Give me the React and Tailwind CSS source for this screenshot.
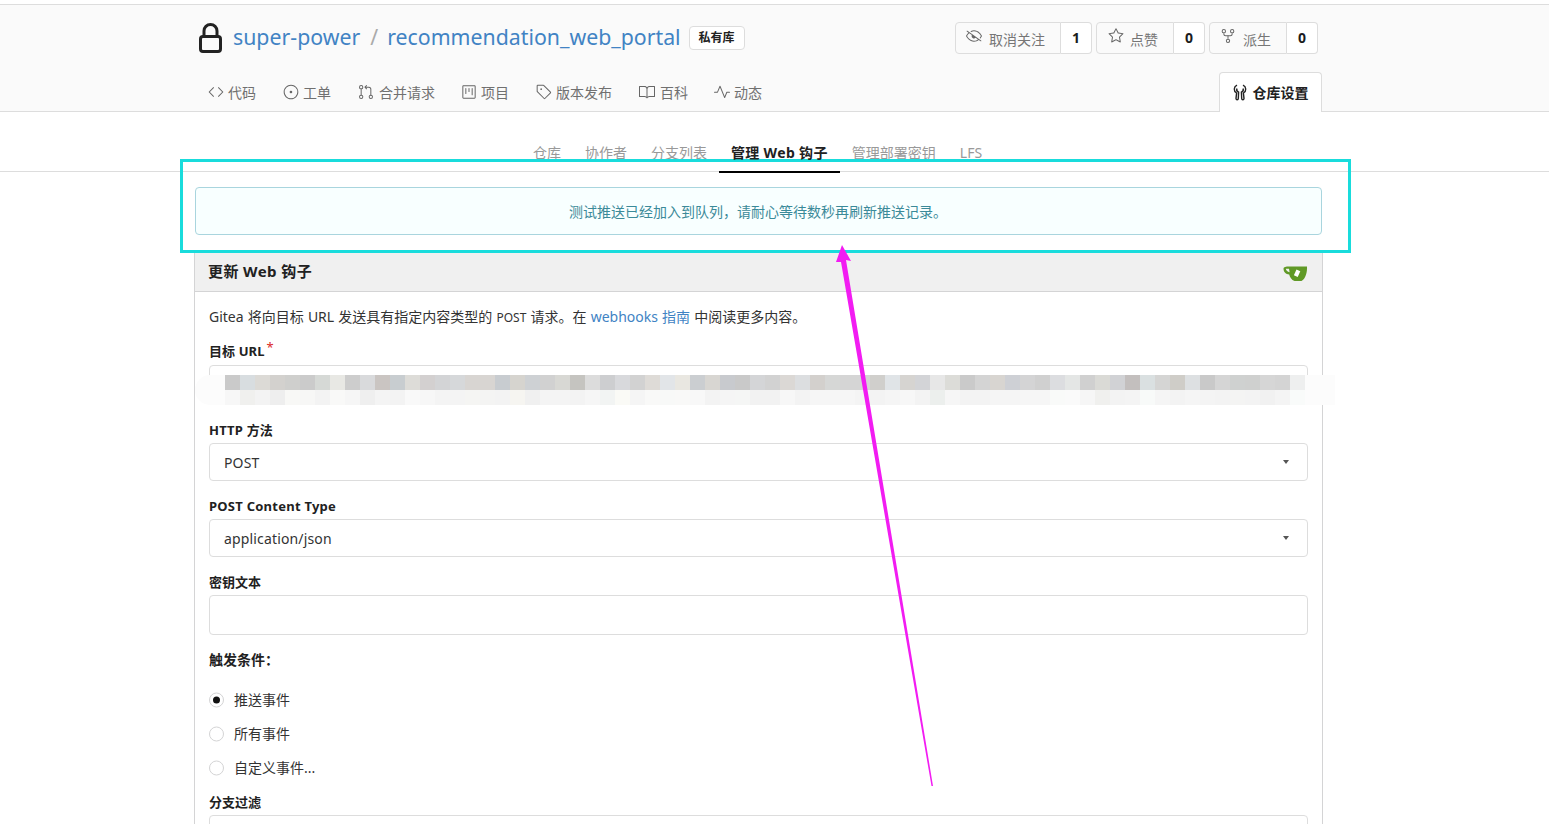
import {
    GoCode,
    GoIssueOpened,
    GoGitPullRequest,
    GoProject,
    GoTag,
    GoBook,
    GoPulse,
    GoEyeClosed,
    GoStar,
    GoRepoForked,
} from "react-icons/go";

const repoTabs = [
    { name: "代码", icon: GoCode, text: "ml-[4px] mr-[1px]" },
    { name: "工单", icon: GoIssueOpened, text: "ml-[4px] mr-[1px]" },
    { name: "合并请求", icon: GoGitPullRequest, text: "ml-[5px]" },
    { name: "项目", icon: GoProject, text: "ml-[4px] mr-[1px]" },
    { name: "版本发布", icon: GoTag, text: "ml-[4px] mr-[1px]" },
    { name: "百科", icon: GoBook, text: "ml-[5px]" },
    { name: "动态", icon: GoPulse, text: "ml-[4px] mr-[1px]" },
];

const subTabs = ["仓库", "协作者", "分支列表", "管理 Web 钩子", "管理部署密钥", "LFS"];

// colours of the blurred squares hiding the url
const topRow = [
    "cacaca", "d8dde0", "dcdad6", "d3d1ce", "cfcfcd", "cbcbcb", "d6d9d6", "e8e8e4", "cdcdcd", "d9dadc", "cac5c2", "c8cdd0",
    "dddcd8", "d3d0d0", "d3d4d6", "d6d8da", "d8d5d2", "d8d5d2", "c8ccd0", "d6d4cf", "ced1d4", "d1d1d1", "d8d8d4", "c5c4c0",
    "dcdcdc", "cdced0", "d8d9dc", "d2d2d2", "dedbd7", "e2e5e8", "e9e7e1", "cbced1", "d8d6d2", "c8cace", "c9c9c9", "d4d5d7",
    "d2d2d2", "dbd8d5", "dcdee0", "d3d0cd", "d6d7d6", "d5d5d5", "d5d5d5", "d0cfcc", "e0e4e7", "d6d4d1", "d3d4d7", "e7e7e7",
    "dcdcd8", "cacaca", "d4d4d4", "d8d5d1", "ced0d5", "d4d4d5", "d0d0d0", "dcdde0", "e4e6e5", "d0d0d0", "dadad6", "d1d2d5",
    "c3bfbe", "dae0e1", "d5d5d4", "cfcdc8", "dde0e2", "c9c9c9", "d5d5d5", "cfd1d0", "cfd0cf", "d6d6d6", "d4d4d4", "eeefef",
];

const bottomRow = [
    "f7f7f7", "f0f0ee", "f3f3f3", "eeeeee", "f8f8f6", "f7f7f6", "f3f3f3", "f9f9f8", "f6f6f6", "efefef", "f4f4f4", "f3f3f3",
    "f9f9f9", "f7f7f7", "f4f4f4", "f4f4f4", "f5f5f3", "f4f4f3", "f3f3f3", "f6f5f1", "f0f0f0", "f4f4f4", "f4f4f4", "f3f3f3",
    "f6f6f6", "f2f4f3", "fafaf6", "f5f5f5", "f9f9f8", "f8f9f8", "f9f9f8", "f8f8f8", "f3f3f3", "f5f5f5", "f5f6f5", "f2f2f2",
    "f2f2f2", "f7f7f7", "f3f3f3", "f6f6f6", "f6f6f6", "f6f6f6", "f4f4f4", "f3f3f3", "f5f5f5", "f7f7f7", "f3f3f3", "ecefed",
    "f6f6f6", "f3f3f3", "f3f3f3", "f5f5f5", "f5f5f5", "f6f6f6", "f6f6f6", "f9faf9", "fafafa", "f6f6f6", "f0f0ee", "f3f3f3",
    "f4f4f4", "f8faf9", "f5f5f5", "f3f3f3", "f5f5f5", "f4f4f4", "f3f3f3", "f4f4f3", "f3f3f3", "f1f1f1", "f4f4f4", "f9fbfa",
];

const Lock = () => (
    <svg width="23" height="30" viewBox="0 0 23 30" className="shrink-0">
        <path d="M5 14V8a6.500 6.500 0 0 1 13 0v6" fill="none" stroke="#222" strokeWidth="3" />
        <rect x="1.500" y="13.500" width="20" height="15" rx="2.500" fill="none" stroke="#222" strokeWidth="3" />
    </svg>
);

const Wrench = () => (
    <svg width="14" height="17" viewBox="0 0 14 17" fill="none" stroke="#222" strokeWidth="1.400">
        <path d="M4 1.200C.6 2.800.3 7 3.600 9L3 14.300C2.900 16.200 5.200 16.200 5.300 14.500L5.600 8.200C4.200 7.500 3.400 5.800 4 4.500M10 1.200C13.400 2.800 13.700 7 10.400 9L11 14.300C11.100 16.200 8.800 16.200 8.700 14.500L8.400 8.200C9.800 7.500 10.600 5.800 10 4.500" />
    </svg>
);

const GiteaCup = () => (
    <svg width="25" height="17" viewBox="0 0 25 17">
        <path d="M6 1.500h18c.4 5.500-1.500 12.500-5.500 14.500h-7C8.500 15 6.800 12 6.200 9.500 3 9.300.5 7 .5 3.500.5 2 3 1.500 6 1.500z" fill="#609926" />
        <path d="M2.800 3.800c1.200-.2 2.400-.2 3.200-.1l.6 3.500c-2-.2-3.500-1.500-3.800-3.400z" fill="#f0f0f0" />
        <path d="M13.500 4.500l3.800 1.800-2.600 5.700-3.800-1.800z" fill="#fff" />
    </svg>
);

const CountButton = ({ icon: Icon, label, count, labelClass }) => (
    <div className="flex h-[32px] text-sm">
        <div
            className={`flex items-center rounded-l border border-[#ddd] bg-[#fafafa] text-[#767676] ${labelClass}`}
        >
            <Icon size={16} className="-translate-y-[2px] text-[#666]" />
            <span className="translate-y-[2px]">{label}</span>
        </div>
        <div className="flex w-[31px] items-center justify-center rounded-r border border-l-0 border-[#ddd] bg-white font-bold text-[#1b1c1d]">
            {count}
        </div>
    </div>
);

const FieldLabel = ({ children, className = "text-[13px]" }) => (
    <div className={`mt-[16px] h-[18px] leading-[18px] font-bold text-[#212121] ${className}`}>
        {children}
    </div>
);

const SelectBox = ({ value }) => (
    <div className="mt-[4px] flex h-[38px] items-center justify-between rounded border border-[#ddd] pr-[18px] pl-[14px] text-sm tracking-[0.15px] text-[#333]">
        <span className="translate-y-[1px]">{value}</span>
        <span className="h-0 w-0 border-x-[3.5px] border-t-[4px] border-x-transparent border-t-[#555]" />
    </div>
);

const Radio = ({ label, checked }) => (
    <div className="flex h-[34px] items-center text-sm text-[#333]">
        <span className="flex h-[15px] w-[15px] -translate-y-[0.5px] items-center justify-center rounded-full border border-[#d4d4d5] bg-white">
            {checked && <span className="h-[7px] w-[7px] rounded-full bg-[#111]" />}
        </span>
        <span className="ml-[10px]">{label}</span>
    </div>
);

const App = () => {
    return (
        <div className="relative h-[824px] w-[1549px] overflow-hidden bg-white font-['Noto_Sans','Noto_Sans_CJK_SC',sans-serif]">
            {/* repo header */}
            <div className="mt-[4px] h-[108px] border-y border-[#ddd] bg-[#fafafa]">
                <div className="ml-[195px] w-[1127px]">
                    <div className="flex items-start justify-between px-[4px] pt-[17px]">
                        <div className="flex h-[32px] items-center">
                            <Lock />
                            <div className="-mt-[2px] flex items-center text-[21.3px]">
                                <span className="ml-[11px] text-[#4183c4]">super-power</span>
                                <span className="mr-[9px] ml-[10px] text-[#aaa]">/</span>
                                <span className="text-[#4183c4]">recommendation_web_portal</span>
                            </div>
                            <span className="ml-[8px] flex h-[24px] w-[56px] items-center justify-center rounded border border-[#ddd] bg-white text-xs font-bold text-[#222]">
                                私有库
                            </span>
                        </div>
                        <div className="flex gap-[4px]">
                            <CountButton icon={GoEyeClosed} label="取消关注" count="1" labelClass="w-[106px] gap-[7px] pl-[10px]" />
                            <CountButton icon={GoStar} label="点赞" count="0" labelClass="w-[78px] gap-[6px] pl-[11px]" />
                            <CountButton icon={GoRepoForked} label="派生" count="0" labelClass="w-[78px] gap-[7px] pl-[10px]" />
                        </div>
                    </div>
                    <div className="mt-[18px] flex h-[40px] items-center justify-between">
                        <div className="flex gap-[26px] pt-[1px] pl-[13px] text-sm text-[#707070]">
                            {repoTabs.map((tab) => (
                                <div key={tab.name} className="flex items-center">
                                    <tab.icon size={16} className="-translate-y-[1px] text-[#666]" />
                                    <span className={tab.text}>{tab.name}</span>
                                </div>
                            ))}
                        </div>
                        <div className="flex h-[40px] w-[103px] items-center justify-center gap-[6px] self-start rounded-t border border-b-0 border-[#ddd] bg-white text-sm font-bold text-[#212121]">
                            <Wrench />
                            仓库设置
                        </div>
                    </div>
                </div>
            </div>

            {/* settings sub navigation */}
            <div className="flex h-[60px] justify-center border-b border-[#ddd] pr-[34px]">
                {subTabs.map((tab) =>
                    tab === "管理 Web 钩子" ? (
                        <div
                            key={tab}
                            className="z-10 h-[61px] border-b-2 border-black px-[12px] pt-[31px] text-sm font-bold tracking-[0.35px] text-[#212121]"
                        >
                            {tab}
                        </div>
                    ) : (
                        <div key={tab} className="px-[12px] pt-[31px] text-sm text-[#999]">
                            {tab}
                        </div>
                    )
                )}
            </div>

            <div className="ml-[195px] w-[1127px]">
                <div className="mt-[15px] flex h-[48px] items-center justify-center rounded border border-[#a9d5de] bg-[#f8ffff] pt-[1px] pr-[1px] text-sm text-[#3b8a99]">
                    测试推送已经加入到队列，请耐心等待数秒再刷新推送记录。
                </div>

                {/* webhook form */}
                <div className="-mx-px mt-[15px] border border-[#d4d4d5]">
                    <div className="flex h-[41px] items-center justify-between border-b border-[#d4d4d5] bg-[#f0f0f0] pr-[14px] pl-[13px]">
                        <span className="text-[15px] font-bold tracking-[0.4px] text-[#212121]">更新 Web 钩子</span>
                        <span className="mt-[5px]">
                            <GiteaCup />
                        </span>
                    </div>
                    <div className="px-[14px] pt-[15px] pb-[40px]">
                        <p className="h-[20px] text-sm leading-5 [word-spacing:0.5px] text-[#333]">
                            Gitea 将向目标 URL 发送具有指定内容类型的 <span className="text-xs">POST</span> 请求。在{" "}
                            <span className="text-[#4183c4]">webhooks 指南</span> 中阅读更多内容。
                        </p>
                        <FieldLabel className="-translate-y-[1px] text-[13px] tracking-[0.1px]">
                            目标 URL<span className="relative -top-[4px] ml-[2px] font-normal text-[#db2828]">*</span>
                        </FieldLabel>
                        <div className="mt-[4px] h-[40px] rounded border border-[#ddd]" />
                        <FieldLabel className="text-[13px] tracking-[0.2px]">HTTP 方法</FieldLabel>
                        <SelectBox value="POST" />
                        <FieldLabel className="text-[13px] tracking-[0.25px]">POST Content Type</FieldLabel>
                        <SelectBox value="application/json" />
                        <FieldLabel>密钥文本</FieldLabel>
                        <div className="mt-[4px] h-[40px] rounded border border-[#ddd]" />
                        <FieldLabel className="text-sm">触发条件：</FieldLabel>
                        <div className="mt-[14px]">
                            <Radio label="推送事件" checked />
                            <Radio label="所有事件" />
                            <Radio label="自定义事件..." />
                        </div>
                        <div className="-mt-[8px]">
                            <FieldLabel>分支过滤</FieldLabel>
                        </div>
                        <div className="mt-[4px] h-[40px] rounded border border-[#ddd]" />
                    </div>
                </div>
            </div>

            {/* pixelated url covering the input */}
            <div className="absolute top-[375px] left-[195px] h-[30px] w-[1140px] rounded-l-2xl bg-[#fcfcfc] pl-[30px]">
                <div className="flex h-[15px]">
                    {topRow.map((c, i) => (
                        <span
                            key={i}
                            className="h-[15px] w-[15px] shrink-0"
                            style={{ backgroundColor: `#${c}` }}
                        />
                    ))}
                </div>
                <div className="flex h-[15px]">
                    {bottomRow.map((c, i) => (
                        <span
                            key={i}
                            className="h-[15px] w-[15px] shrink-0"
                            style={{ backgroundColor: `#${c}` }}
                        />
                    ))}
                </div>
            </div>

            {/* annotation drawn over the page */}
            <div className="pointer-events-none absolute top-[159px] left-[180px] h-[94px] w-[1171px] border-[3px] border-[#19dcdc]" />
            <svg className="pointer-events-none absolute top-0 left-0" width="1549" height="824">
                <polygon points="842,245 851,261 846,260 933,786 931.500,786 841,262 836,262" fill="#f21cf2" />
            </svg>
        </div>
    );
};

export default App;
